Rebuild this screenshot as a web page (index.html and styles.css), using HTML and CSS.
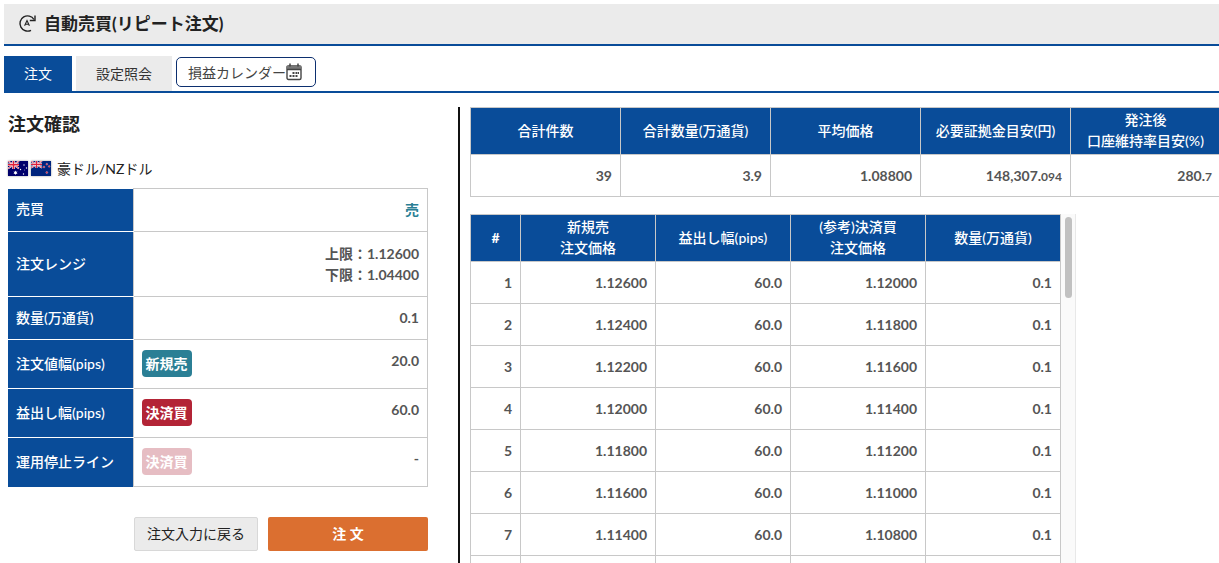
FILE: index.html
```html
<!DOCTYPE html>
<html lang="ja">
<head>
<meta charset="utf-8">
<title>自動売買(リピート注文)</title>
<link rel="stylesheet" href="styles.css">
</head>
<body>
<header class="page-header">
  <svg class="repeat-icon" viewBox="0 0 20 20" aria-hidden="true">
    <path d="M13 16.300A7.600 7.600 0 1 1 16 5.500" fill="none" stroke="#222" stroke-width="1.400"/>
    <path d="M17 1.500v5h-5.200" fill="none" stroke="#222" stroke-width="1.400"/>
    <path d="M6.600 11.800l2.400-5.300 2.400 5.300M7.500 10.200h3" fill="none" stroke="#222" stroke-width="1.100"/>
  </svg>
  <h1 class="page-title">自動売買(リピート注文)</h1>
</header>
<nav class="tabs">
  <a class="tab tab-active" href="#order">注文</a>
  <a class="tab" href="#settings">設定照会</a>
  <button class="calendar-button" type="button">損益カレンダー<svg class="calendar-icon" viewBox="0 0 16 18" aria-hidden="true">
      <path d="M2 3h12a1 1 0 0 1 1 1v11a1.500 1.500 0 0 1-1.500 1.500h-11A1.500 1.500 0 0 1 1 15V4a1 1 0 0 1 1-1z" fill="none" stroke="#444" stroke-width="1.400"/>
      <path d="M1 3h14v3.500H1z" fill="#777"/>
      <path d="M1 6.500h14M4 .5v3M12 .5v3" stroke="#444" stroke-width="1.500"/>
      <path d="M6.500 10h2M9.500 10h2M12 10h1M3.500 13h2M6.500 13h2M9.500 13h2" stroke="#444" stroke-width="1.800"/>
    </svg></button>
</nav>
<main class="content" id="order">
  <section class="confirm">
    <h2 class="confirm-title">注文確認</h2>
    <div class="pair">
      <svg class="flag" viewBox="0 0 20 15" aria-hidden="true">
        <path fill="#00006b" d="M0 0h20v15H0z"/>
        <path d="M0 0l11 7.500M11 0L0 7.500" stroke="#fff" stroke-width="1.600"/>
        <path d="M0 0l11 7.500M11 0L0 7.500" stroke="#e0203a" stroke-width=".7"/>
        <path d="M5.500 0v8M0 3.800h11" stroke="#fff" stroke-width="2.600"/>
        <path d="M5.500 0v8M0 3.800h11" stroke="#e0203a" stroke-width="1.500"/>
        <g fill="#fff"><path d="M7.500 9.500l.6 1.300 1.400-.3-.8 1.200.8 1.200-1.400-.2-.6 1.300-.6-1.300-1.400.2.8-1.200-.8-1.200 1.400.3z"/><circle cx="16" cy="4" r=".7"/><circle cx="12.500" cy="8.500" r=".7"/><circle cx="18.500" cy="7" r=".7"/><circle cx="16.500" cy="9" r=".4"/><circle cx="15.500" cy="13" r=".7"/></g>
      </svg>
      <svg class="flag" viewBox="0 0 20 15" aria-hidden="true">
        <path fill="#00247d" d="M0 0h20v15H0z"/>
        <path d="M0 0l11 6.800M11 0L0 6.800" stroke="#fff" stroke-width="1.600"/>
        <path d="M0 0l11 6.800M11 0L0 6.800" stroke="#e0203a" stroke-width=".7"/>
        <path d="M5.500 0v7M0 3.400h11" stroke="#fff" stroke-width="2.200"/>
        <path d="M5.500 0v7M0 3.400h11" stroke="#e0203a" stroke-width="1.300"/>
        <g fill="#e0203a" stroke="#fff" stroke-width=".3"><circle cx="15.800" cy="3.200" r=".9"/><circle cx="13" cy="6" r=".9"/><circle cx="18.200" cy="5.400" r=".9"/><circle cx="15.800" cy="11.500" r="1"/></g>
      </svg>
      <span class="pair-name">豪ドル/NZドル</span>
    </div>
    <table class="detail">
      <tr class="row-side"><th scope="row">売買</th><td><span class="sell">売</span></td></tr>
      <tr class="row-range"><th scope="row">注文レンジ</th><td>上限：1.12600<br>下限：1.04400</td></tr>
      <tr class="row-amount"><th scope="row">数量(万通貨)</th><td>0.1</td></tr>
      <tr class="row-badge"><th scope="row">注文値幅(pips)</th><td><div class="value"><span class="badge badge-new">新規売</span><span>20.0</span></div></td></tr>
      <tr class="row-badge"><th scope="row">益出し幅(pips)</th><td><div class="value"><span class="badge badge-close">決済買</span><span>60.0</span></div></td></tr>
      <tr class="row-badge"><th scope="row">運用停止ライン</th><td><div class="value"><span class="badge badge-off">決済買</span><span>-</span></div></td></tr>
    </table>
    <div class="actions">
      <button class="back-button" type="button">注文入力に戻る</button>
      <button class="order-button" type="button">注 文</button>
    </div>
  </section>
  <section class="results">
    <table class="grid summary">
      <thead><tr><th>合計件数</th><th>合計数量(万通貨)</th><th>平均価格</th><th>必要証拠金目安(円)</th><th>発注後<br>口座維持率目安(%)</th></tr></thead>
      <tbody><tr><td>39</td><td>3.9</td><td>1.08800</td><td>148,307.<small>094</small></td><td>280.<small>7</small></td></tr></tbody>
    </table>
    <div class="order-list">
      <table class="grid orders">
        <thead><tr><th class="col-no">#</th><th>新規売<br>注文価格</th><th>益出し幅(pips)</th><th>(参考)決済買<br>注文価格</th><th>数量(万通貨)</th></tr></thead>
        <tbody>
          <tr><td>1</td><td>1.12600</td><td>60.0</td><td>1.12000</td><td>0.1</td></tr>
          <tr><td>2</td><td>1.12400</td><td>60.0</td><td>1.11800</td><td>0.1</td></tr>
          <tr><td>3</td><td>1.12200</td><td>60.0</td><td>1.11600</td><td>0.1</td></tr>
          <tr><td>4</td><td>1.12000</td><td>60.0</td><td>1.11400</td><td>0.1</td></tr>
          <tr><td>5</td><td>1.11800</td><td>60.0</td><td>1.11200</td><td>0.1</td></tr>
          <tr><td>6</td><td>1.11600</td><td>60.0</td><td>1.11000</td><td>0.1</td></tr>
          <tr><td>7</td><td>1.11400</td><td>60.0</td><td>1.10800</td><td>0.1</td></tr>
          <tr><td></td><td></td><td></td><td></td><td></td></tr>
        </tbody>
      </table>
      <div class="scroll-track"><div class="scroll-thumb"></div></div>
    </div>
  </section>
</main>
</body>
</html>
```
FILE: styles.css
```css
* { box-sizing: border-box; }
html { height: 100%; overflow: hidden; }
body {
  display: flex;
  flex-direction: column;
  height: 100%;
  margin: 0;
  padding: 4px 0 0 4px;
  overflow: hidden;
  background: #fff;
  color: #222;
  font: 14px/21px Lato, "Noto Sans CJK JP", sans-serif;
}
h1, h2 { margin: 0; }
button { font: inherit; cursor: pointer; }
table { border-collapse: collapse; border-spacing: 0; }

.page-header {
  display: flex;
  flex: none;
  align-items: center;
  gap: 6px;
  height: 42px;
  padding: 0 14px;
  background: #ebebeb;
  border-bottom: 2px solid #094c99;
}
.repeat-icon { width: 20px; height: 20px; }
.page-title { font-size: 17px; line-height: 24px; }

.tabs {
  display: flex;
  flex: none;
  gap: 4px;
  height: 37px;
  margin-top: 10px;
  border-bottom: 2px solid #094c99;
}
.tab {
  display: flex;
  align-items: center;
  padding: 0 20px;
  background: #ebebeb;
  color: #333;
  text-decoration: none;
}
.tab-active { background: #094c99; color: #fff; }
.calendar-button {
  display: flex;
  align-items: center;
  height: 30px;
  margin-top: 1px;
  padding: 0 13px 0 11px;
  background: #fff;
  border: 1px solid #0c2f6f;
  border-radius: 5px;
  color: #444;
}
.calendar-icon { width: 16px; height: 18px; }

.content { display: flex; flex: 1; min-height: 0; margin-top: 14px; }
.confirm {
  flex: none;
  width: 456px;
  padding: 4px 30px 0 4px;
  border-right: 2px solid #111;
}
.confirm-title { font-size: 18px; line-height: 27px; }
.pair { display: flex; align-items: center; gap: 3px; margin: 20px 0 9px; }
.flag { width: 20px; height: 15px; box-shadow: 0 0 2px #999; }
.pair-name { margin-left: 3px; }

.detail { width: 100%; table-layout: fixed; }
.detail th {
  width: 125px;
  padding: 0 8px 2px;
  background: #094c99;
  border-bottom: 1px solid #fff;
  color: #fff;
  font-weight: 500;
  text-align: left;
}
.detail tr:last-child th { border-bottom: 0; }
.detail td {
  padding: 0 8px 1px;
  border: 1px solid #c8c8c8;
  color: #555;
  font-weight: 700;
  text-align: right;
}
.row-side, .row-amount { height: 43px; }
.row-range { height: 65px; }
.row-badge { height: 49px; }
.sell { color: #2b7f95; }
.value { display: flex; justify-content: space-between; align-items: flex-start; }
.badge {
  padding: 3px 4px;
  border-radius: 4px;
  color: #fff;
}
.badge-new { background: #2b7f95; }
.badge-close { background: #b32436; }
.badge-off { background: #e6bdc3; }

.actions { display: flex; justify-content: flex-end; gap: 10px; margin-top: 30px; }
.back-button {
  width: 124px;
  height: 34px;
  padding: 0 0 2px;
  background: #ebebeb;
  border: 1px solid #d8d8d8;
  border-radius: 2px;
  color: #222;
}
.order-button {
  width: 160px;
  height: 34px;
  padding: 0 0 2px;
  background: #db6f30;
  border: 0;
  border-radius: 2px;
  color: #fff;
  font-weight: 700;
}

.results { flex: 1; min-width: 0; padding-left: 10px; }
.grid { table-layout: fixed; }
.grid th, .grid td { padding: 0 8px; border: 1px solid #c8c8c8; }
.grid th {
  height: 47px;
  padding: 1px 0 3px;
  background: #094c99;
  color: #fff;
  font-weight: 500;
  text-align: center;
}
.grid td { height: 42px; color: #555; font-weight: 700; text-align: right; }
.grid small { font-size: 12px; }
.summary { width: 751px; }
.order-list { display: flex; margin-top: 17px; }
.orders { width: 591px; }
.orders .col-no { width: 50px; font-weight: 700; }
.scroll-track {
  width: 15px;
  padding: 3px 3px 0 4px;
  background: #fafafa;
  border-right: 1px solid #e8e8e8;
}
.scroll-thumb { height: 81px; border-radius: 4px; background: #c1c1c1; }
```
